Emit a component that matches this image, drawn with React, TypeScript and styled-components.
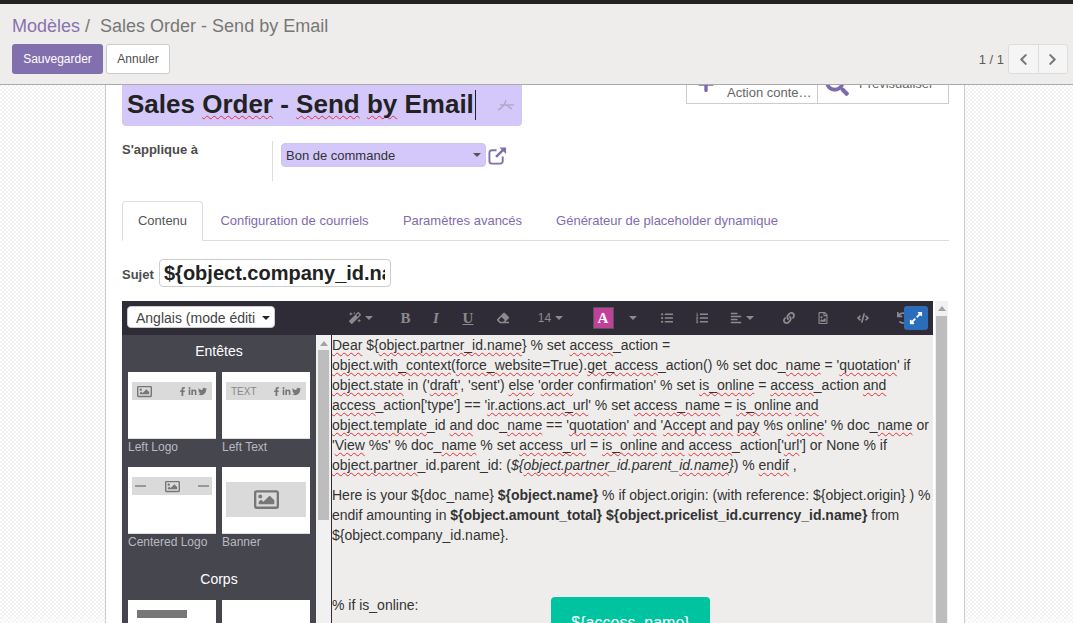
import React from "react";
import styled, { createGlobalStyle } from "styled-components";
import {
  FaMagic, FaEraser, FaListUl, FaListOl, FaAlignLeft, FaLink, FaRegFileImage, FaCode, FaUndo,
  FaExpandAlt, FaPlus, FaSearch, FaChevronLeft, FaChevronRight,
  FaRegImage, FaFacebookF, FaLinkedinIn, FaTwitter,
} from "react-icons/fa";

const Global = createGlobalStyle`
  html, body { margin: 0; padding: 0; height: 100%; overflow: hidden; }
  body { font-family: "Liberation Sans", Arial, sans-serif; font-size: 13px; color: #4c4c4c; }
  * { box-sizing: border-box; }
`;

const Page = styled.div`
  height: 623px; display: flex; flex-direction: column; overflow: hidden;
`;
const TopStrip = styled.div`height: 4px; background: #222; flex: none;`;
const ControlPanel = styled.header`
  flex: none; height: 81px; background: #eeedeb; border-bottom: 1px solid #a9a9a9;
  padding: 11px 5px 0 12px;
`;
const Breadcrumb = styled.div`font-size: 18px; line-height: 22px; color: #777; white-space: pre; height: 29px;`;
const Crumb = styled.span`color: #8a72b0;`;
const CurrentCrumb = styled.span`margin-left: 5px;`;
const ControlRow = styled.div`display: flex; align-items: center; height: 30px;`;
const PrimaryButton = styled.div`
  width: 91px; height: 30px; border-radius: 3px; background: #8270ae; color: #fff;
  font-size: 12px; display: flex; align-items: center; justify-content: center;
`;
const GhostButton = styled.div`
  width: 64px; height: 30px; margin-left: 3px; border-radius: 3px; background: #fff; border: 1px solid #ccc;
  color: #4c4c4c; font-size: 12px; display: flex; align-items: center; justify-content: center;
`;
const Pager = styled.div`margin-left: auto; display: flex; align-items: center; color: #5f5a55; font-size: 13px;`;
const PagerButtons = styled.div`
  display: flex; margin-left: 4px; width: 60px; height: 30px; border: 1px solid #ddd; border-radius: 3px; background: #f5f5f5;
`;
const PagerButton = styled.div<{ $divider?: boolean }>`
  flex: 1; display: flex; align-items: center; justify-content: center; color: #777; font-size: 13px;
  border-right: ${p => (p.$divider ? "1px solid #ddd" : "none")};
`;

const Main = styled.main`
  flex: 1; min-height: 0; overflow: hidden;
  background: repeating-conic-gradient(#fff 0 25%, #f3f3f3 0 50%) 0 0 / 4px 4px;
`;
const Sheet = styled.div`
  margin-left: 105px; width: 860px; height: 100%; background: #fff;
  border-left: 1px solid #ccc; border-right: 1px solid #ccc; padding: 0 15px 0 16px; overflow: hidden;
`;
const TitleRow = styled.div`display: flex; height: 41px; align-items: flex-start;`;
const TitleBox = styled.div`
  width: 400px; height: 41px; background: #d4c8fb; border-radius: 0 0 4px 4px;
  display: flex; align-items: center; padding: 0 4px 2px 5px; font-size: 26px; font-weight: 700; color: #222; white-space: pre;
`;
const Caret = styled.span`display: inline-block; width: 1px; height: 30px; background: #222; margin-left: 1px;`;
const LangMark = styled.svg`margin-left: auto; margin-right: 3px; width: 18px; height: 14px;`;
const StatBox = styled.div`
  margin-left: auto; margin-top: -26px; width: 263px; height: 45px; display: flex;
  border: 1px solid #ccc; background: #fff; flex: none; color: #666;
`;
const StatCell = styled.div<{ $w: number; $pad: number; $divider?: boolean }>`
  width: ${p => p.$w}px; padding-left: ${p => p.$pad}px; display: flex; align-items: flex-end;
  border-left: ${p => (p.$divider ? "1px solid #ccc" : "none")};
  color: #7d6aae;
`;
const StatLabel = styled.div<{ $gap: number; $bottom: number }>`
  margin-left: ${p => p.$gap}px; margin-bottom: ${p => p.$bottom}px; line-height: 20px; font-size: 13px; color: #666; white-space: nowrap;
`;

const FieldRow = styled.div`display: flex; height: 40px; margin-top: 15px;`;
const FieldLabel = styled.div`width: 150px; font-weight: 700; font-size: 13px; line-height: 18px;`;
const FieldBody = styled.div`display: flex; border-left: 1px solid #ddd; padding: 2px 0 0 8px; height: 40px;`;
const ManySelect = styled.div`
  width: 205px; height: 24px; border-radius: 4px; background: #d4c8fb; color: #333; font-size: 13px;
  display: flex; align-items: center; justify-content: space-between; padding: 0 4px; border: 1px solid #cfc4ee;
`;
const ArrowDown = styled.span<{ $c?: string; $s?: number }>`
  display: inline-block; width: 0; height: 0; flex: none;
  border-left: ${p => p.$s ?? 4}px solid transparent; border-right: ${p => p.$s ?? 4}px solid transparent;
  border-top: ${p => p.$s ?? 4}px solid ${p => p.$c ?? "#555"};
`;
const ExternalLink = styled.svg`margin: 3px 0 0 2px; width: 19px; height: 19px; color: #8270ae;`;

const Tabs = styled.nav`
  display: flex; height: 40px; margin-top: 20px; border-bottom: 1px solid #ddd; font-size: 13px;
`;
const Tab = styled.div<{ $active?: boolean; $w: number }>`
  width: ${p => p.$w}px; height: 40px; padding-bottom: 2px; display: flex; align-items: center; justify-content: center; color: ${p => (p.$active ? "#555" : "#7f6bb0")};
  background: ${p => (p.$active ? "#fff" : "transparent")}; border: 1px solid ${p => (p.$active ? "#ddd" : "transparent")};
  border-bottom: 1px solid ${p => (p.$active ? "#fff" : "transparent")}; border-radius: 4px 4px 0 0;
`;
const SubjectRow = styled.div`display: flex; align-items: center; margin-top: 18px; height: 28px;`;
const SubjectLabel = styled.div`width: 37px; font-weight: 700; font-size: 13px; padding-top: 2px;`;
const SubjectInput = styled.div`
  width: 232px; height: 28px; border: 1px solid #ccc; border-radius: 4px; padding: 0 5px 0 4px;
`;
const SubjectValue = styled.div`
  font-size: 20px; line-height: 26px; font-weight: 700; color: #222; overflow: hidden; white-space: nowrap;
`;

const Editor = styled.section`margin-top: 14px; display: flex; height: 340px; overflow: hidden;`;
const SnippetColumn = styled.div`
  width: 210px; flex: none; display: flex; flex-direction: column; border-right: 1px solid #2f2c37;
`;
const SnippetHeader = styled.div`flex: none; height: 34px; background: #2f2c37; padding: 5px; `;
const LangSelect = styled.div`
  width: 148px; height: 22px; background: #fff; border-radius: 4px; border: 1px solid #ccc;
  display: flex; align-items: center; justify-content: space-between; padding: 1px 4px 0 8px; font-size: 14px; color: #444; white-space: nowrap; overflow: hidden;
`;
const SnippetBody = styled.div`flex: 1; display: flex; min-height: 0;`;
const SnippetList = styled.div`
  width: 194px; flex: none; background: #46464f; padding: 0 6px; overflow: hidden;
`;
const SnippetTitle = styled.div<{ $top: number }>`
  color: #fff; font-size: 14px; line-height: 20px; text-align: center; margin: ${p => p.$top}px 0 11px;
`;
const SnippetGrid = styled.div`display: grid; grid-template-columns: 88px 88px; column-gap: 6px; row-gap: 12px;`;
const SnippetItem = styled.div`display: flex; flex-direction: column;`;
const Thumb = styled.div`
  height: 67px; background: #fff; border-bottom: 1px solid #ddd; padding: 10px 4px 0;
`;
const BannerThumb = styled(Thumb)`padding-top: 15px;`;
const ThumbBar = styled.div<{ $tight?: boolean }>`
  height: 18px; background: #d9dad9; display: flex; align-items: center; padding: 0 ${p => (p.$tight ? 3 : 5)}px; color: #777;
  justify-content: space-between; font-size: 10px;
`;
const BannerBlock = styled.div`
  height: 35px; background: #d9dad9; color: #777; font-size: 25px; display: flex; align-items: center; justify-content: center;
`;
const Socials = styled.span`display: flex; gap: 1px; font-size: 9px; align-items: center;`;
const ThumbText = styled.span`font-size: 10px; color: #888;`;
const Dash = styled.span`width: 11px; height: 2px; background: #999; flex: none;`;
const ThumbLabel = styled.div`font-size: 12px; color: #b9b9bf; line-height: 16px; margin-top: 0;`;
const BodyThumb = styled.div`height: 67px; background: #fff; padding: 10px 9px 0;`;
const DarkBar = styled.div`width: 50px; height: 8px; background: #777;`;

const ScrollTrack = styled.div<{ $w: number; $pad: number }>`
  width: ${p => p.$w}px; flex: none; background: #f1f1f1; display: flex; flex-direction: column; align-items: center;
  padding-top: ${p => p.$pad}px;
`;
const ArrowUp = styled.span`
  width: 0; height: 0; border-left: 4px solid transparent; border-right: 4px solid transparent; border-bottom: 5px solid #a3a3a3; flex: none;
`;
const ScrollThumb = styled.div<{ $h: number; $w: number; $top: number }>`
  width: ${p => p.$w}px; height: ${p => p.$h}px; background: #bdbdbd; margin-top: ${p => p.$top}px; flex: none;
`;

const EditColumn = styled.div`width: 601px; flex: none; display: flex; flex-direction: column;`;
const Toolbar = styled.div`
  flex: none; position: relative; height: 34px; background: #2f2c37; display: flex; align-items: center; color: #8a8a8f; font-size: 12px;
`;
const Tool = styled.div<{ $w: number }>`
  width: ${p => p.$w}px; flex: none; display: flex; align-items: center; justify-content: center; gap: 4px; line-height: 1;
`;
const SerifGlyph = styled.span<{ $italic?: boolean; $under?: boolean }>`
  font-family: "Liberation Serif", serif; font-weight: 700; font-size: 15px;
  font-style: ${p => (p.$italic ? "italic" : "normal")};
  text-decoration: ${p => (p.$under ? "underline" : "none")};
`;
const ColorButton = styled.div`
  width: 21px; height: 22px; margin-left: 1px; background: #c0409a; border: 1px solid #555; color: #fff; display: flex; align-items: center; justify-content: center;
  font-family: "Liberation Serif", serif; font-weight: 700; font-size: 15px;
`;
const FullscreenButton = styled.div`
  position: absolute; top: 5px; right: 5px; width: 24px; height: 24px; border-radius: 3px; background: #2a6ebb;
  color: #fff; font-size: 14px; display: flex; align-items: center; justify-content: center;
`;
const Content = styled.div`
  flex: 1; background: #eeedeb; border-left: 0; color: #333; font-size: 14px; line-height: 20px; overflow: hidden;
`;
const Para = styled.p`margin: 0 0 10px;`;
const Typo = styled.span`
  text-decoration: underline wavy #e5303a 1px; text-underline-offset: 2px; text-decoration-skip-ink: none;
`;
const OnlineRow = styled.div`display: flex; align-items: flex-start; margin-top: 50px;`;
const OnlineText = styled.div`width: 219px; flex: none;`;
const AccessButton = styled.div`
  width: 159px; height: 60px; margin-top: 2px; background: #00c49f; color: #fff; border-radius: 4px; padding-top: 16px;
  text-align: center; font-size: 16px;
`;
const OuterScroll = styled.div`margin-left: 2px; flex: none;`;

const T = Typo;

function Snippet({ label, children }: { label: string; children: React.ReactNode }) {
  return (
    <SnippetItem>
      {children}
      <ThumbLabel>{label}</ThumbLabel>
    </SnippetItem>
  );
}

const SocialIcons = () => (
  <Socials><FaFacebookF /><FaLinkedinIn /><FaTwitter /></Socials>
);

export default function App() {
  return (
    <Page>
      <Global />
      <TopStrip />
      <ControlPanel>
        <Breadcrumb><Crumb>Modèles</Crumb> /<CurrentCrumb> Sales Order - Send by Email</CurrentCrumb></Breadcrumb>
        <ControlRow>
          <PrimaryButton>Sauvegarder</PrimaryButton>
          <GhostButton>Annuler</GhostButton>
          <Pager>
            1 / 1
            <PagerButtons>
              <PagerButton $divider><FaChevronLeft /></PagerButton>
              <PagerButton><FaChevronRight /></PagerButton>
            </PagerButtons>
          </Pager>
        </ControlRow>
      </ControlPanel>
      <Main>
        <Sheet>
          <TitleRow>
            <TitleBox>
              <span>Sales <T>Order</T> - <T>Send</T> <T>by</T> Email</span><Caret />
              <LangMark viewBox="0 0 18 14" fill="none" stroke="#b3a8c9" strokeWidth="1.4">
                <path d="M1 12 C5 10 8 7 9 2 M3 7 H17 M10 7 C11 9 13 10 15 11" />
              </LangMark>
            </TitleBox>
            <StatBox>
              <StatCell $w={130} $pad={10}>
                <FaPlus size={18} style={{ marginBottom: 10, flex: "none" }} />
                <StatLabel $gap={12} $bottom={0}>Action conte…</StatLabel>
              </StatCell>
              <StatCell $w={131} $pad={7} $divider>
                <FaSearch size={24} style={{ marginBottom: 7, flex: "none" }} />
                <StatLabel $gap={10} $bottom={9}>Prévisualiser</StatLabel>
              </StatCell>
            </StatBox>
          </TitleRow>

          <FieldRow>
            <FieldLabel>S'applique à</FieldLabel>
            <FieldBody>
              <ManySelect>Bon de commande<ArrowDown /></ManySelect>
              <ExternalLink viewBox="0 0 20 20" fill="none" stroke="currentColor">
                <path d="M15.5 11v5a2.5 2.5 0 0 1-2.5 2.5H4A2.5 2.5 0 0 1 1.500 16V7A2.500 2.500 0 0 1 4 4.500h5" strokeWidth="2" />
                <path d="M8.500 11.500 17 3" strokeWidth="2.600" />
                <path d="M12 1.500h7v7z" fill="currentColor" stroke="none" />
              </ExternalLink>
            </FieldBody>
          </FieldRow>

          <Tabs>
            <Tab $active $w={81}>Contenu</Tab>
            <Tab $w={183}>Configuration de courriels</Tab>
            <Tab $w={153}>Paramètres avancés</Tab>
            <Tab $w={256}>Générateur de placeholder dynamique</Tab>
          </Tabs>

          <SubjectRow>
            <SubjectLabel>Sujet</SubjectLabel>
            <SubjectInput><SubjectValue>{"${object.company_id.name}"}</SubjectValue></SubjectInput>
          </SubjectRow>

          <Editor>
            <SnippetColumn>
              <SnippetHeader>
                <LangSelect>Anglais (mode éditi<ArrowDown $c="#222" $s={4} /></LangSelect>
              </SnippetHeader>
              <SnippetBody>
                <SnippetList>
                  <SnippetTitle $top={6}>Entêtes</SnippetTitle>
                  <SnippetGrid>
                    <Snippet label="Left Logo">
                      <Thumb><ThumbBar><FaRegImage size={15} /><SocialIcons /></ThumbBar></Thumb>
                    </Snippet>
                    <Snippet label="Left Text">
                      <Thumb><ThumbBar><ThumbText>TEXT</ThumbText><SocialIcons /></ThumbBar></Thumb>
                    </Snippet>
                    <Snippet label="Centered Logo">
                      <Thumb><ThumbBar $tight><Dash /><FaRegImage size={15} /><Dash /></ThumbBar></Thumb>
                    </Snippet>
                    <Snippet label="Banner">
                      <BannerThumb><BannerBlock><FaRegImage /></BannerBlock></BannerThumb>
                    </Snippet>
                  </SnippetGrid>
                  <SnippetTitle $top={19}>Corps</SnippetTitle>
                  <SnippetGrid>
                    <BodyThumb><DarkBar /></BodyThumb>
                    <BodyThumb />
                  </SnippetGrid>
                </SnippetList>
                <ScrollTrack $w={15} $pad={6}>
                  <ArrowUp />
                  <ScrollThumb $w={11} $h={170} $top={4} />
                </ScrollTrack>
              </SnippetBody>
            </SnippetColumn>

            <EditColumn>
              <Toolbar>
                <Tool $w={58}><FaMagic /><ArrowDown $c="#8a8a8f" /></Tool>
                <Tool $w={31}><SerifGlyph>B</SerifGlyph></Tool>
                <Tool $w={30}><SerifGlyph $italic>I</SerifGlyph></Tool>
                <Tool $w={34}><SerifGlyph $under>U</SerifGlyph></Tool>
                <Tool $w={35}><FaEraser /></Tool>
                <Tool $w={61}>14<ArrowDown $c="#8a8a8f" /></Tool>
                <Tool $w={43}><ColorButton>A</ColorButton></Tool>
                <Tool $w={18}><ArrowDown $c="#8a8a8f" /></Tool>
                <Tool $w={50}><FaListUl /></Tool>
                <Tool $w={20}><FaListOl /></Tool>
                <Tool $w={60}><FaAlignLeft /><ArrowDown $c="#8a8a8f" /></Tool>
                <Tool $w={34}><FaLink /></Tool>
                <Tool $w={33}><FaRegFileImage /></Tool>
                <Tool $w={48}><FaCode /></Tool>
                <Tool $w={32}><FaUndo /></Tool>
                <FullscreenButton><FaExpandAlt /></FullscreenButton>
              </Toolbar>
              <Content>
                <Para>
                  <T>Dear</T> {"${"}<T>object.partner_id.name</T>{"}"} % set <T>access</T>_action = <T>object.with_context</T>(<T>force_website=True</T>).<T>get_access</T>_action() % set doc_<T>name</T> = '<T>quotation</T>' if <T>object.state</T> in ('<T>draft</T>', 'sent') <T>else</T> '<T>order</T> confirmation' % set <T>is_online</T> = <T>access</T>_action <T>and</T> <T>access</T>_action['type'] == '<T>ir.actions.act_url</T>' % set <T>access_name</T> = <T>is_online</T> <T>and</T> <T>object.template</T>_id <T>and</T> doc_<T>name</T> == '<T>quotation</T>' <T>and</T> '<T>Accept</T> <T>and</T> <T>pay</T> %s <T>online</T>' % doc_<T>name</T> or '<T>View</T> %s' % doc_<T>name</T> % set <T>access_url</T> = <T>is_online</T> <T>and</T> <T>access</T>_action['<T>url</T>'] or None % if <T>object.partner</T>_id.parent_id: (<em>{"${"}<T>object.partner</T>_id.parent_<T>id.name</T>{"}"}</em>) % <T>endif</T> ,
                </Para>
                <Para>
                  Here is your {"${doc_name}"} <strong>{"${object.name}"}</strong> % if object.origin: (with reference: {"${object.origin}"} ) % endif amounting in <strong>{"${object.amount_total}"}</strong> <strong>{"${object.pricelist_id.currency_id.name}"}</strong> from {"${object.company_id.name}"}.
                </Para>
                <OnlineRow>
                  <OnlineText>% if is_online:</OnlineText>
                  <AccessButton>{"${access_name}"}</AccessButton>
                </OnlineRow>
              </Content>
            </EditColumn>

            <OuterScroll>
              <ScrollTrack $w={13} $pad={5}>
                <ArrowUp />
                <ScrollThumb $w={11} $h={320} $top={5} />
              </ScrollTrack>
            </OuterScroll>
          </Editor>
        </Sheet>
      </Main>
    </Page>
  );
}
